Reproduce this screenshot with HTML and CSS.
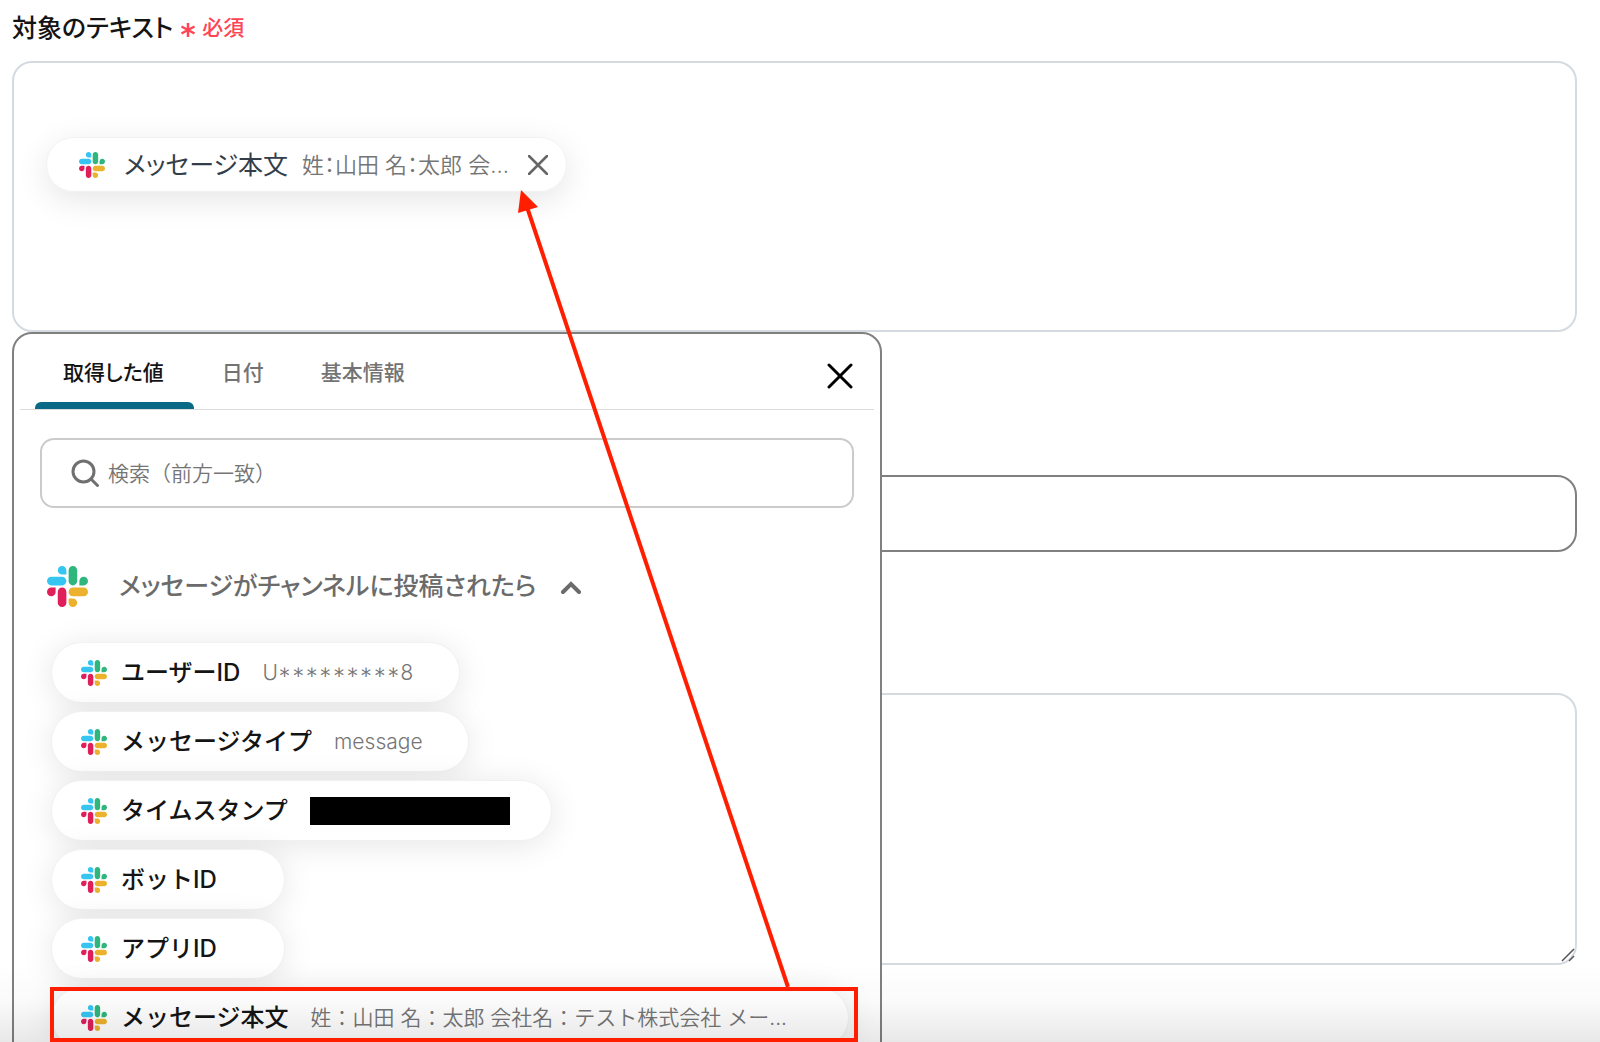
FILE: index.html
```
<!DOCTYPE html>
<html lang="ja">
<head>
<meta charset="utf-8">
<meta name="viewport" content="width=device-width, initial-scale=1">
<title>対象のテキスト</title>
<link rel="stylesheet" href="styles.css">
</head>
<body>
<svg class="sprite" aria-hidden="true">
  <symbol id="slack" viewBox="0 0 122.8 122.8">
    <path fill="#e01e5a" d="M25.8 77.6c0 7.1-5.8 12.9-12.9 12.9S0 84.7 0 77.6s5.8-12.9 12.9-12.9h12.9v12.9zM32.3 77.6c0-7.1 5.8-12.9 12.9-12.9s12.9 5.8 12.9 12.9v32.3c0 7.1-5.8 12.9-12.9 12.9s-12.9-5.8-12.9-12.9V77.6z"/>
    <path fill="#36c5f0" d="M45.2 25.8c-7.1 0-12.9-5.8-12.9-12.9S38.1 0 45.2 0s12.9 5.8 12.9 12.9v12.9H45.2zM45.2 32.3c7.1 0 12.9 5.8 12.9 12.9s-5.8 12.9-12.9 12.9H12.9C5.8 58.1 0 52.3 0 45.2s5.8-12.9 12.9-12.9h32.3z"/>
    <path fill="#2eb67d" d="M97 45.2c0-7.1 5.8-12.9 12.9-12.9s12.9 5.8 12.9 12.9-5.8 12.9-12.9 12.9H97V45.2zM90.5 45.2c0 7.1-5.8 12.9-12.9 12.9s-12.9-5.8-12.9-12.9V12.9C64.7 5.8 70.5 0 77.6 0s12.9 5.8 12.9 12.9v32.3z"/>
    <path fill="#ecb22e" d="M77.6 97c7.1 0 12.9 5.8 12.9 12.9s-5.8 12.9-12.9 12.9-12.9-5.8-12.9-12.9V97h12.9zM77.6 90.5c-7.1 0-12.9-5.8-12.9-12.9s5.8-12.9 12.9-12.9h32.3c7.1 0 12.9 5.8 12.9 12.9s-5.8 12.9-12.9 12.9H77.6z"/>
  </symbol>
</svg>
<main class="page">
  <form class="form">
    <div class="field">
      <div class="field-label" id="target-label">対象のテキスト <span class="required"><svg class="required-mark" viewBox="0 0 16 16" aria-hidden="true"><path d="M8 1v14M1.500 4.500l13 7M14.500 4.500l-13 7"/></svg>必須</span></div>
      <div class="editor" role="textbox" aria-labelledby="target-label">
        <span class="token">
          <svg class="icon-small" aria-hidden="true"><use href="#slack"/></svg>
          <span class="token-name">メッセージ本文</span>
          <span class="token-value">姓：山田 名：太郎 会...</span>
          <button class="icon-button token-remove" type="button" aria-label="削除"><svg viewBox="0 0 20 20"><path d="M1 1l18 18M19 1L1 19"/></svg></button>
        </span>
      </div>

      <section class="picker">
        <header class="picker-head">
          <div class="tabs" role="tablist">
            <button class="tab tab-active" type="button" role="tab" aria-selected="true">取得した値</button>
            <button class="tab" type="button" role="tab">日付</button>
            <button class="tab" type="button" role="tab">基本情報</button>
          </div>
          <button class="icon-button picker-close" type="button" aria-label="閉じる"><svg viewBox="0 0 26 26"><path d="M2 2l22 22M24 2L2 24"/></svg></button>
        </header>
        <label class="search">
          <svg class="search-icon" viewBox="0 0 28 28" aria-hidden="true"><circle cx="12.500" cy="12.500" r="10.500"/><path d="M20 20l6.500 6.500"/></svg>
          <input class="search-input" type="text" placeholder="検索（前方一致）" aria-label="検索">
        </label>
        <button class="group" type="button" aria-expanded="true">
          <svg class="icon-large" aria-hidden="true"><use href="#slack"/></svg>
          <span class="group-name">メッセージがチャンネルに投稿されたら</span>
          <svg class="chevron" viewBox="0 0 20 14" aria-hidden="true"><path d="M2 11l8-8 8 8"/></svg>
        </button>
        <div class="chips">
          <button class="chip" type="button"><svg class="icon-small" aria-hidden="true"><use href="#slack"/></svg><span class="chip-name">ユーザーID</span><span class="chip-value chip-value-id">U*********8</span></button>
          <button class="chip" type="button"><svg class="icon-small" aria-hidden="true"><use href="#slack"/></svg><span class="chip-name">メッセージタイプ</span><span class="chip-value">message</span></button>
          <button class="chip chip-redacted" type="button"><svg class="icon-small" aria-hidden="true"><use href="#slack"/></svg><span class="chip-name">タイムスタンプ</span><span class="redacted"></span></button>
          <button class="chip" type="button"><svg class="icon-small" aria-hidden="true"><use href="#slack"/></svg><span class="chip-name">ボットID</span><span class="chip-value"></span></button>
          <button class="chip" type="button"><svg class="icon-small" aria-hidden="true"><use href="#slack"/></svg><span class="chip-name">アプリID</span><span class="chip-value"></span></button>
          <button class="chip chip-long" type="button"><svg class="icon-small" aria-hidden="true"><use href="#slack"/></svg><span class="chip-name">メッセージ本文</span><span class="chip-value">姓：山田 名：太郎 会社名：テスト株式会社 メー...</span></button>
        </div>
      </section>
    </div>
    <input class="line-input" type="text" aria-label="入力">
    <div class="text-area-wrap">
      <textarea class="text-area" aria-label="本文"></textarea>
      <svg class="grip" viewBox="0 0 14 14" aria-hidden="true"><path d="M1 13L13 1M8 13l5-5"/></svg>
    </div>
  </form>
  <div class="fade"></div>
  <svg class="callout" viewBox="0 0 860 1042" aria-hidden="true">
    <rect x="52" y="989" width="804" height="51"/>
    <path d="M788 987L527 207"/>
    <path class="callout-head" d="M521 190l17 17-20 6z"/>
  </svg>
</main>
</body>
</html>
```
FILE: styles.css
```
* {
  box-sizing: border-box;
}

body {
  margin: 0;
  background: #fff;
  color: #141414;
  font-family: Inter, "Noto Sans CJK JP", sans-serif;
}

button,
input,
textarea {
  font: inherit;
  color: inherit;
}

button {
  border: 0;
  padding: 0;
  background: none;
  cursor: pointer;
}

svg {
  display: block;
  flex: none;
}

.sprite {
  position: absolute;
  width: 0;
  height: 0;
}

.page {
  position: relative;
  height: 100vh;
  overflow: hidden;
}

.form {
  display: flex;
  flex-direction: column;
  padding: 12px 23px 0 12px;
}

.field {
  position: relative;
}

.field-label {
  display: flex;
  align-items: center;
  gap: 7px;
  height: 28px;
  margin-bottom: 21px;
  font-size: 25px;
  font-weight: 500;
  font-feature-settings: "palt";
}

.required {
  display: flex;
  align-items: center;
  gap: 6px;
  color: #ff4454;
  font-size: 21px;
}

.required-mark {
  width: 16px;
  height: 16px;
  margin-top: 8px;
  fill: none;
  stroke: currentColor;
  stroke-width: 2.500;
}

.editor {
  height: 271px;
  padding: 74px 32px;
  border: 2px solid #d5dae1;
  border-radius: 20px;
}

.token {
  display: inline-flex;
  align-items: center;
  height: 55px;
  padding: 0 18px 0 32px;
  border: 1px solid #f1f1f1;
  border-radius: 28px;
  box-shadow: 0 8px 32px rgba(0, 0, 0, 0.1);
  font-feature-settings: "palt";
}

.icon-small {
  width: 26px;
  height: 26px;
}

.token-name {
  margin-left: 19px;
  padding-bottom: 4px;
  color: #333e4a;
  font-size: 25px;
}

.token-value {
  margin-left: 14px;
  padding-bottom: 4px;
  color: #757575;
  font-size: 22px;
  font-weight: 350;
}

.icon-button svg {
  fill: none;
  stroke: currentColor;
  stroke-linecap: round;
}

.token-remove {
  margin-left: 19px;
  color: #666;
}

.token-remove svg {
  width: 20px;
  height: 20px;
  stroke-width: 2.500;
}

.picker {
  position: absolute;
  top: 100%;
  left: 0;
  z-index: 1;
  width: 870px;
  padding: 0 6px 40px;
  border: 2px solid #808080;
  border-radius: 20px;
  background: #fff;
}

.picker-head {
  display: flex;
  justify-content: space-between;
  height: 76px;
  padding: 0 21px 0 15px;
  border-bottom: 1px solid #dcdcdc;
}

.tabs {
  display: flex;
}

.tab {
  padding: 6px 29px 0 28px;
  border-bottom: 7px solid transparent;
  color: #737373;
  font-size: 21px;
  font-weight: 500;
  font-feature-settings: "palt";
}

.tab-active {
  position: relative;
  padding-right: 30px;
  color: #141414;
}

.tab-active::after {
  content: "";
  position: absolute;
  right: 0;
  bottom: -7px;
  left: 0;
  height: 7px;
  border-radius: 6px 6px 0 0;
  background: #0a6a85;
}

.picker-close {
  padding-top: 9px;
  color: #000;
}

.picker-close svg {
  width: 26px;
  height: 26px;
  stroke-width: 3;
}

.search {
  display: flex;
  align-items: center;
  gap: 9px;
  height: 70px;
  margin: 28px 20px 0;
  padding: 0 29px;
  border: 2px solid #cbcbcb;
  border-radius: 14px;
}

.search-icon {
  width: 28px;
  height: 28px;
  fill: none;
  stroke: #707070;
  stroke-width: 3;
  stroke-linecap: round;
}

.search-input {
  flex: 1;
  min-width: 0;
  padding: 0;
  border: 0;
  outline: 0;
  background: none;
  font-size: 21px;
  font-weight: 350;
}

.search-input::placeholder {
  color: #757575;
  opacity: 1;
}

.group {
  display: flex;
  align-items: center;
  height: 40px;
  margin: 58px 0 36px 27px;
  color: #6b6b6b;
  font-size: 25px;
  font-weight: 500;
  font-feature-settings: "palt";
}

.icon-large {
  width: 41px;
  height: 41px;
}

.group-name {
  margin: 0 25px 0 31px;
  padding-bottom: 4px;
}

.chevron {
  width: 20px;
  height: 14px;
  margin-top: 4px;
  fill: none;
  stroke: currentColor;
  stroke-width: 4;
  stroke-linecap: round;
}

.chips {
  display: flex;
  flex-direction: column;
  align-items: flex-start;
  gap: 8px;
  padding-left: 31px;
}

.chip {
  display: flex;
  align-items: center;
  height: 61px;
  padding: 0 45px 0 29px;
  border: 1px solid #f1f1f1;
  border-radius: 31px;
  background: #fff;
  box-shadow: 0 4px 32px rgba(0, 0, 0, 0.1);
  white-space: nowrap;
}

.chip-redacted {
  padding-right: 41px;
}

.chip-long {
  width: 798px;
}

.chip-name {
  margin: 0 22px 0 14px;
  padding-bottom: 4px;
  font-size: 24px;
  font-weight: 500;
}

.chip-value {
  color: #757575;
  font-size: 21px;
  font-weight: 350;
}

.chip-value-id {
  font-feature-settings: "tnum", "case";
}

.chip-long .chip-value {
  padding-bottom: 4px;
}

.redacted {
  width: 200px;
  height: 28px;
  background: #000;
}

.line-input {
  height: 77px;
  margin-top: 143px;
  padding: 0 24px;
  border: 2px solid #808080;
  border-radius: 20px;
}

.text-area-wrap {
  position: relative;
  margin-top: 141px;
}

.text-area {
  display: block;
  width: 100%;
  height: 272px;
  padding: 24px;
  border: 2px solid #d5dae1;
  border-radius: 20px;
  resize: none;
}

.grip {
  position: absolute;
  right: 2px;
  bottom: 3px;
  width: 14px;
  height: 14px;
  fill: none;
  stroke: #555;
  stroke-width: 1.500;
}

.fade {
  position: absolute;
  right: 0;
  bottom: 0;
  left: 0;
  z-index: 2;
  height: 80px;
  background: linear-gradient(rgba(0, 0, 0, 0), rgba(0, 0, 0, 0.02) 50%, rgba(0, 0, 0, 0.09));
  pointer-events: none;
}

.callout {
  position: absolute;
  top: 0;
  left: 0;
  z-index: 3;
  width: 860px;
  height: 1042px;
  fill: none;
  stroke: #ff1f00;
  stroke-width: 4;
  pointer-events: none;
}

.callout-head {
  fill: #ff1f00;
  stroke: none;
}
```
